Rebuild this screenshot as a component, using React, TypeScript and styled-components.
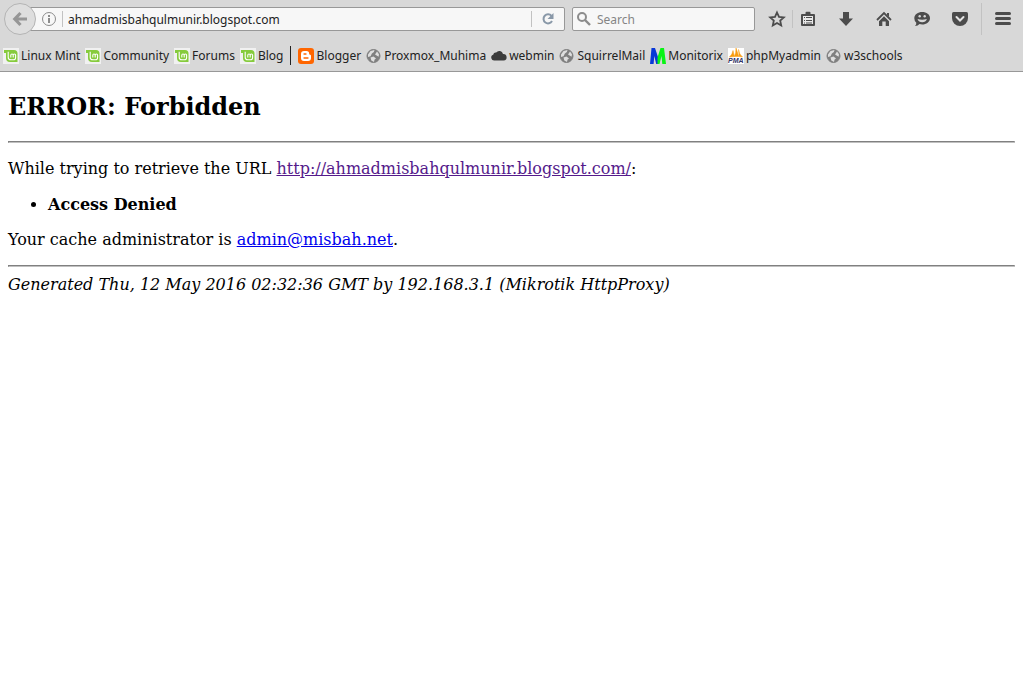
import React from "react";
import styled, { createGlobalStyle, css } from "styled-components";

const ui = css`
  font-family: "Noto Sans", "Open Sans", sans-serif;
  font-size: 12px;
`;

const GlobalStyle = createGlobalStyle`
  *, *::before, *::after { box-sizing: border-box; }
  body { margin: 0; background: #ffffff; }
`;

const Chrome = styled.header`
  ${ui}
  background: #d8d8d8;
  border-bottom: 1px solid #989898;
  color: #222222;
`;

const NavBar = styled.div`
  display: flex;
  align-items: center;
  height: 38px;
  padding-left: 4px;
`;

const PlainButton = styled.button`
  display: flex;
  align-items: center;
  justify-content: center;
  padding: 0;
  border: 0;
  background: none;
  color: inherit;
  flex: none;
`;

const BackButton = styled(PlainButton)`
  width: 32px;
  height: 32px;
  border: 1px solid #b4b4b4;
  border-radius: 50%;
  background: #dedede;
  z-index: 1;
`;

const Field = styled.div`
  display: flex;
  align-items: center;
  height: 24px;
  border: 1px solid #989898;
  border-radius: 2px;
  background: #f7f7f7;
`;

const AddressField = styled(Field)`
  flex: 1;
  min-width: 0;
  margin-left: -16px;
  margin-right: 7px;
`;

const SearchField = styled(Field)`
  width: 183px;
  padding-left: 3px;
  margin-right: 7px;
`;

const FieldInput = styled.input`
  ${ui}
  flex: 1;
  min-width: 0;
  height: 20px;
  padding: 0 5px;
  border: 0;
  outline: 0;
  background: transparent;
  color: #222222;
  &::placeholder { color: #858585; opacity: 1; }
`;

const InfoButton = styled(PlainButton)`
  width: 16px;
  height: 16px;
  margin: 0 5px 0 20px;
`;

const ReloadButton = styled(PlainButton)`
  width: 32px;
  height: 20px;
`;

const Rule = styled.span<{ $height: number }>`
  width: 1px;
  height: ${(p) => p.$height}px;
  background: #c2c2c2;
  flex: none;
`;

const ToolButton = styled(PlainButton)<{ $width?: number }>`
  width: ${(p) => p.$width ?? 38}px;
  height: 32px;
`;

const MenuGroup = styled.div`
  display: flex;
  align-items: center;
  margin-left: 2px;
`;

const Tools = styled.div`
  display: flex;
  align-items: center;
  margin-left: -4px;
`;

const Bookmarks = styled.nav`
  display: flex;
  align-items: center;
  gap: 5px;
  height: 33px;
  padding: 2px 0 0 3px;
`;

const Bookmark = styled.a`
  display: flex;
  align-items: center;
  gap: 2px;
  flex: none;
  color: #222222;
  text-decoration: none;
  white-space: nowrap;
  line-height: 16px;
`;

const BookmarkDivider = styled.span`
  width: 1px;
  height: 19px;
  margin: 0 2px;
  background: #222222;
  flex: none;
`;

const Page = styled.main`
  padding: 0 8px;
  font-family: "DejaVu Serif", serif;
  font-size: 16px;
  line-height: 19px;
  color: #000000;
`;

const Title = styled.h2`
  margin: 0;
  padding: 20px 0;
  font-size: 24px;
  line-height: 29px;
`;

const Line = styled.hr`
  margin: 0;
  border: 1px solid;
  border-color: #808080 #c0c0c0 #c0c0c0 #808080;
`;

const Text = styled.p`
  margin: 16px 0;
`;

const Reasons = styled.ul`
  margin: 17px 0 16px;
  padding-left: 40px;
`;

const PageLink = styled.a<{ $visited?: boolean }>`
  color: ${(p) => (p.$visited ? "#551a8b" : "#0000ee")};
`;

const Footer = styled.address`
  padding-top: 8px;
`;

const Drawing = styled.svg`
  display: block;
  flex: none;
  overflow: visible;
`;

const Svg = ({ children }: { children: React.ReactNode }) => (
  <Drawing width="16" height="16" viewBox="0 0 16 16" aria-hidden="true">
    {children}
  </Drawing>
);

const MintIcon = () => (
  <Svg>
    <rect width="16" height="16" fill="#f1f1f1" />
    <path d="M1 2h10q3.500 0 3.500 3.500V14H7Q3 14 3 10V5H1z" fill="#86cb3c" />
    <path d="M5.200 3.800V9.200q0 2.600 2.600 2.600h2.400q2.400 0 2.400-2.400V7.200q0-1.200-1.200-1.200t-1.200 1.200V9.500M10.200 7.200Q10.200 6 9 6T7.800 7.200V9.500" fill="none" stroke="#fff" strokeWidth="1.100" />
  </Svg>
);

const GlobeIcon = () => (
  <Svg>
    <circle cx="7.500" cy="8" r="6.500" fill="#7f7f7f" stroke="#808080" />
    <path d="M2 6.500L4.500 3l4-1-.6 2-2 1.400L4.600 8.200 2 9zM11 3.500l2 2.700-.4 2.600-2-1.300-1.600-1 1-1.400zM4.500 9.500l3-1 2.500 2-1.400 1-.6 2.600-2.700-1.600z" fill="#dedede" />
  </Svg>
);

const BloggerIcon = () => (
  <Svg>
    <rect width="16" height="16" rx="3" fill="#ff6600" />
    <path d="M6 3h2.500A2.700 2.700 0 0 1 11.200 5.700V6q0 .8.900.8.900 0 .9.900V10a3 3 0 0 1-3 3H6a3 3 0 0 1-3-3V6a3 3 0 0 1 3-3z" fill="#fff" />
    <path d="M6 6h2M6 10h4" stroke="#ff6600" strokeWidth="1.300" strokeLinecap="round" />
  </Svg>
);

const CloudIcon = () => (
  <Svg>
    <path d="M3.500 12.500A3 3 0 0 1 2.200 6.700a2.700 2.700 0 0 1 3-2.200A3.800 3.800 0 0 1 12 5.900a3.300 3.300 0 0 1 .6 6.600z" fill="#3b3b3b" />
  </Svg>
);

const MonitorixIcon = () => (
  <Svg>
    <path d="M0 16L1.500 0H5l3 9V16H6.200L4.300 8 3.600 16z" fill="#0838d8" />
    <path d="M7.500 16V9.500L10.500 0H14l2 16h-3.700l-.8-8-2 8z" fill="#08f414" />
  </Svg>
);

const PmaIcon = () => (
  <Svg>
    <rect width="16" height="16" fill="#fff" />
    <path d="M1.500 9Q4.500 6.500 5 2.500L6.300 8.500zM6.300 8.500Q8.200 5 8 0L10.800 8.500zM10.500 1.500Q11 6 14.500 9l-3.300-.5z" fill="#f89c0e" stroke="#f89c0e" strokeWidth=".5" />
    <text x="0" y="15" fontFamily="Liberation Sans, sans-serif" fontSize="7" fontWeight="700" fontStyle="italic" fill="#333366">PMA</text>
  </Svg>
);

const BOOKMARKS = [
  [
    { label: "Linux Mint", Icon: MintIcon },
    { label: "Community", Icon: MintIcon },
    { label: "Forums", Icon: MintIcon },
    { label: "Blog", Icon: MintIcon },
  ],
  [
    { label: "Blogger", Icon: BloggerIcon },
    { label: "Proxmox_Muhima", Icon: GlobeIcon },
    { label: "webmin", Icon: CloudIcon },
    { label: "SquirrelMail", Icon: GlobeIcon },
    { label: "Monitorix", Icon: MonitorixIcon },
    { label: "phpMyadmin", Icon: PmaIcon },
    { label: "w3schools", Icon: GlobeIcon },
  ],
];

const INK = "#4c4c4c";

const TOOLS = [
  {
    label: "Bookmarks menu",
    art: (
      <>
        <path fillRule="evenodd" d="M2 3H5.500V1.800q0-1 1-1h3q1 0 1 1V3H14q1 0 1 1v10q0 1-1 1H2q-1 0-1-1V4Q1 3 2 3zM3 5v8h10V5z" fill={INK} />
        <path d="M3 5h10v8H3z" fill="#e8e8e8" />
        <path d="M4 6.500h1M6 6.500h6M4 9.500h1M6 9.500h6M4 12h1M6 12h6" stroke={INK} strokeWidth="1" />
      </>
    ),
  },
  { label: "Downloads", art: <path d="M5 1h6v6.500h4L8 15 1 7.500h4z" fill={INK} /> },
  {
    label: "Home",
    art: (
      <>
        <path d="M1 9l7-7 7 7" fill="none" stroke={INK} strokeWidth="1.800" />
        <path d="M11 2h2v4l-2-2zM8 5.200l5 5V15H9.700v-4.500H6.300V15H3v-4.800z" fill={INK} />
      </>
    ),
  },
  {
    label: "Hello",
    art: (
      <>
        <path d="M8.200 1C12.500 1 16 3.500 16 7.200s-3.500 6.300-7.800 6.300q-1.500 0-2.700-.4Q4 15 1 15q1.500-1.500 1.300-3.200Q.3 10 .3 7.200C.3 3.500 4 1 8.200 1z" fill={INK} />
        <circle cx="5.700" cy="5.300" r="1.200" fill="#d8d8d8" />
        <circle cx="10.700" cy="5.300" r="1.200" fill="#d8d8d8" />
        <path d="M3.500 8q4.700 1.400 9.400 0-1.200 3.300-4.700 3.300T3.500 8z" fill="#d8d8d8" />
      </>
    ),
  },
  {
    label: "Pocket",
    art: (
      <>
        <path d="M1.500 1h13q1.500 0 1.500 1.500V7a8 8 0 0 1-16 0V2.500Q0 1 1.500 1z" fill={INK} />
        <path d="M4.500 6L8 9.500 11.500 6" fill="none" stroke="#e4e4e4" strokeWidth="2" strokeLinecap="round" />
      </>
    ),
  },
];

export default function App() {
  return (
    <>
      <GlobalStyle />
      <Chrome>
        <NavBar>
          <BackButton aria-label="Back">
            <Svg>
              <path d="M8.500 2L2.800 8l5.700 6M3.500 8H15" fill="none" stroke="#969696" strokeWidth="3.200" />
            </Svg>
          </BackButton>
          <AddressField>
            <InfoButton aria-label="Site information">
              <Svg>
                <circle cx="8" cy="8" r="6.500" fill="none" stroke="#8c8c8c" />
                <path d="M8 4v2M8 7v5" stroke="#8c8c8c" strokeWidth="2" />
              </Svg>
            </InfoButton>
            <Rule $height={16} />
            <FieldInput aria-label="Address" defaultValue="ahmadmisbahqulmunir.blogspot.com" />
            <Rule $height={16} />
            <ReloadButton aria-label="Reload">
              <Svg>
                <path d="M11.500 5A4.500 4.500 0 1 0 12 10" fill="none" stroke="#8998a8" strokeWidth="2" />
                <path d="M13.500 2v6h-6z" fill="#8998a8" />
              </Svg>
            </ReloadButton>
          </AddressField>
          <SearchField>
            <Svg>
              <circle cx="6" cy="6" r="4" fill="none" stroke="#8c8c8c" strokeWidth="2" />
              <path d="M9 9l5 5" stroke="#8c8c8c" strokeWidth="2.400" />
            </Svg>
            <FieldInput aria-label="Search" placeholder="Search" />
          </SearchField>
          <ToolButton $width={30} aria-label="Bookmark this page">
            <Svg>
              <path d="M8 1.500l2 4.400 4.800.5-3.600 3.200 1 4.900L8 12l-4.200 2.500 1-4.900L1.200 6.400 6 5.900z" fill="none" stroke={INK} strokeWidth="1.800" />
            </Svg>
          </ToolButton>
          <Rule $height={18} />
          <Tools>
            {TOOLS.map((tool) => (
              <ToolButton key={tool.label} aria-label={tool.label}>
                <Svg>{tool.art}</Svg>
              </ToolButton>
            ))}
          </Tools>
          <MenuGroup>
            <Rule $height={32} />
            <ToolButton $width={41} aria-label="Open menu">
              <Svg>
                <path d="M1.500 2.500h13M1.500 7.500h13M1.500 12.500h13" stroke={INK} strokeWidth="3" strokeLinecap="round" />
              </Svg>
            </ToolButton>
          </MenuGroup>
        </NavBar>
        <Bookmarks aria-label="Bookmarks">
          {BOOKMARKS.map((group, i) => (
            <React.Fragment key={i}>
              {i > 0 && <BookmarkDivider />}
              {group.map(({ label, Icon }) => (
                <Bookmark key={label} href="#">
                  <Icon />
                  {label}
                </Bookmark>
              ))}
            </React.Fragment>
          ))}
        </Bookmarks>
      </Chrome>
      <Page>
        <Title>ERROR: Forbidden</Title>
        <Line />
        <Text>
          While trying to retrieve the URL{" "}
          <PageLink $visited href="#">http://ahmadmisbahqulmunir.blogspot.com/</PageLink>:
        </Text>
        <Reasons>
          <li><b>Access Denied</b></li>
        </Reasons>
        <Text>
          Your cache administrator is <PageLink href="#">admin@misbah.net</PageLink>.
        </Text>
        <Line />
        <Footer>Generated Thu, 12 May 2016 02:32:36 GMT by 192.168.3.1 (Mikrotik HttpProxy)</Footer>
      </Page>
    </>
  );
}
